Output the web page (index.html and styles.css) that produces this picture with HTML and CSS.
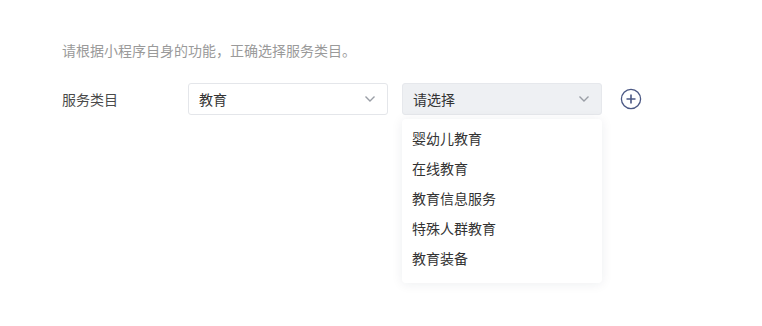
FILE: index.html
```html
<!DOCTYPE html>
<html>
<head lang="zh">
    <meta charset="UTF-8">
    <title>服务类目</title>
    <link rel="stylesheet" href="styles.css">
</head>
<body>
<div class="page">
    <p class="tip">请根据小程序自身的功能，正确选择服务类目。</p>

    <div class="row">
        <span class="label">服务类目</span>

        <div class="select">
            <span class="select-text">教育</span>
            <svg class="arrow" width="12" height="8" viewBox="0 0 12 8"><path d="M1.5 1.5 L6 6 L10.5 1.5" fill="none" stroke="#9a9ea6" stroke-width="1.4"/></svg>
        </div>

        <div class="select-wrap">
            <div class="select select-open">
                <span class="select-text">请选择</span>
                <svg class="arrow" width="12" height="8" viewBox="0 0 12 8"><path d="M1.5 1.5 L6 6 L10.5 1.5" fill="none" stroke="#9a9ea6" stroke-width="1.4"/></svg>
            </div>
            <div class="options">
                <div class="option">婴幼儿教育</div>
                <div class="option">在线教育</div>
                <div class="option">教育信息服务</div>
                <div class="option">特殊人群教育</div>
                <div class="option">教育装备</div>
            </div>
        </div>

        <div class="add">
            <svg width="22" height="22" viewBox="0 0 22 22">
                <circle cx="11" cy="11" r="9.6" fill="none" stroke="#4b5884" stroke-width="1.3"/>
                <path d="M11 6.5 V15.5 M6.5 11 H15.5" stroke="#4b5884" stroke-width="1.6"/>
            </svg>
        </div>
    </div>
</div>
</body>
</html>
```

FILE: styles.css
```css
* {
    margin: 0;
    padding: 0;
}

body {
    background: #fff;
    font-family: "Noto Sans CJK SC", "Noto Sans", sans-serif;
    font-size: 14px;
    color: #333;
}

.page {
    padding: 40px 0 40px 62px;
}

.tip {
    line-height: 20px;
    color: #9a9a9a;
}

.row {
    display: flex;
    align-items: flex-start;
    margin-top: 23px;
}

.label {
    width: 126px;
    line-height: 32px;
    color: #4a4a4a;
}

.select {
    width: 200px;
    height: 32px;
    box-sizing: border-box;
    display: flex;
    align-items: center;
    justify-content: space-between;
    padding: 0 11px 0 10px;
    border: 1px solid #e4e6ea;
    border-radius: 3px;
    background: #fff;
}

.select-text {
    color: #333;
}

.select-wrap {
    margin-left: 14px;
}

.select-open {
    background: #eef0f3;
    border-color: #e6e8ec;
}

.options {
    margin-top: 4px;
    width: 200px;
    box-sizing: border-box;
    padding: 4px 0 10px;
    background: #fff;
    border-radius: 4px;
    box-shadow: 0 1px 12px rgba(30, 40, 70, 0.08);
}

.option {
    height: 30px;
    line-height: 30px;
    padding-left: 10px;
    color: #333;
}

.add {
    height: 32px;
    display: flex;
    align-items: center;
    margin-left: 18px;
}
```
